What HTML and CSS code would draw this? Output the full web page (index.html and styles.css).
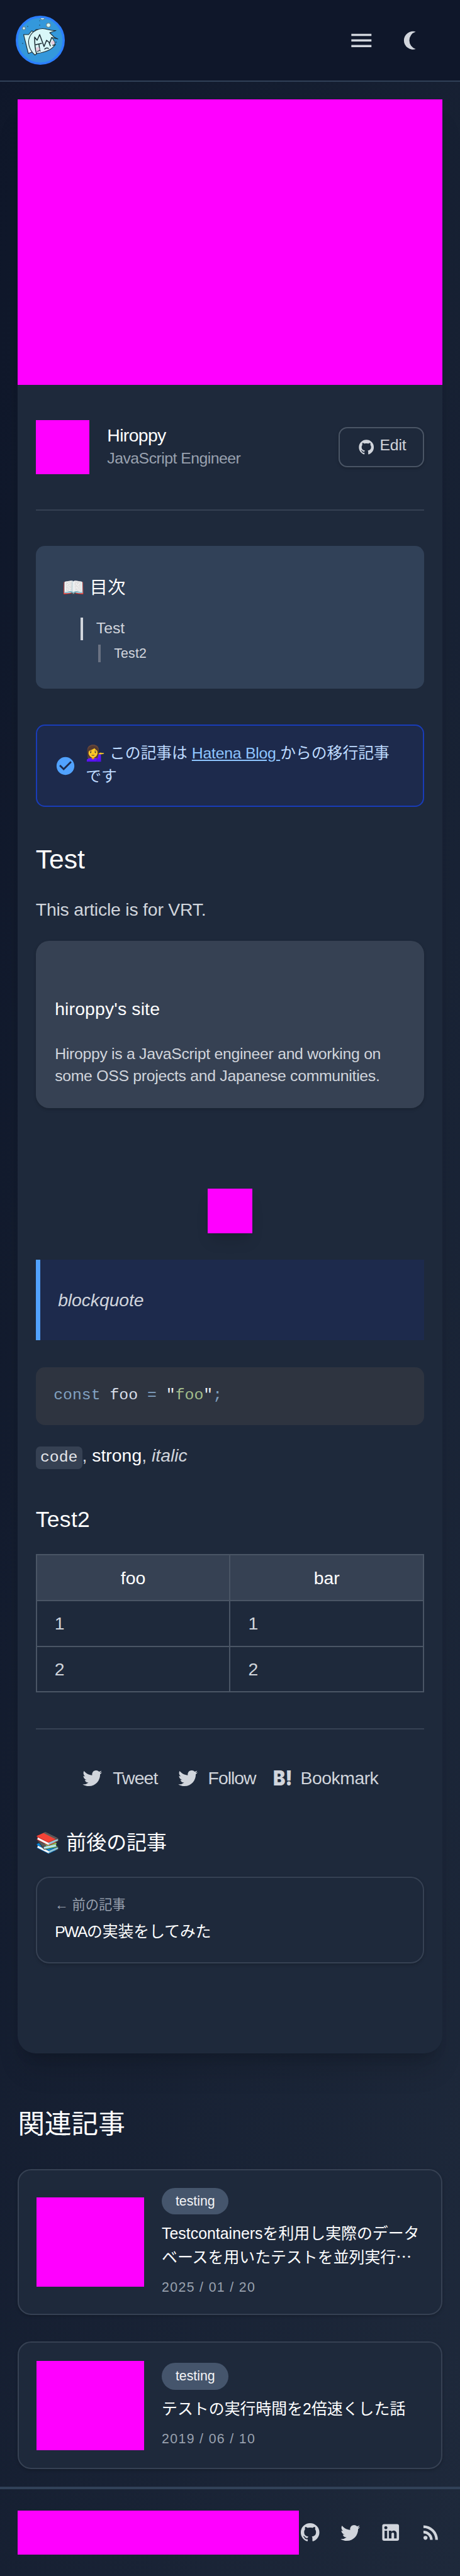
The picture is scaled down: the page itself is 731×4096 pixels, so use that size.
FILE: index.html
```html
<!DOCTYPE html>
<html lang="ja">
<head>
<meta charset="utf-8">
<title>Test</title>
<link rel="stylesheet" href="styles.css">
</head>
<body>
<svg class="sprite" aria-hidden="true">
  <symbol id="github" viewBox="0 0 24 24"><path d="M12 2A10 10 0 0 0 2 12c0 4.42 2.87 8.17 6.84 9.5c.5.08.66-.23.66-.5v-1.69c-2.77.6-3.36-1.34-3.36-1.34c-.46-1.16-1.11-1.47-1.11-1.47c-.91-.62.07-.6.07-.6c1 .07 1.53 1.03 1.53 1.03c.87 1.52 2.34 1.07 2.91.83c.09-.65.35-1.09.63-1.34c-2.22-.25-4.55-1.11-4.55-4.92c0-1.11.38-2 1.03-2.71c-.1-.25-.45-1.29.1-2.64c0 0 .84-.27 2.75 1.02c.79-.22 1.65-.33 2.5-.33c.85 0 1.71.11 2.5.33c1.91-1.29 2.75-1.02 2.75-1.02c.55 1.35.2 2.39.1 2.64c.65.71 1.03 1.6 1.03 2.71c0 3.82-2.34 4.66-4.57 4.91c.36.31.69.92.69 1.85V21c0 .27.16.59.67.5C19.14 20.16 22 16.42 22 12A10 10 0 0 0 12 2"/></symbol>
  <symbol id="twitter" viewBox="0 0 24 24"><path d="M22.46 6c-.77.35-1.6.58-2.46.69c.88-.53 1.56-1.37 1.88-2.38c-.83.5-1.75.85-2.72 1.05C18.37 4.5 17.26 4 16 4c-2.35 0-4.27 1.92-4.27 4.29c0 .34.04.67.11.98C8.28 9.09 5.11 7.38 3 4.79c-.37.63-.58 1.37-.58 2.15c0 1.49.75 2.81 1.91 3.56c-.71 0-1.37-.2-1.95-.5v.03c0 2.08 1.48 3.82 3.44 4.21a4.22 4.22 0 0 1-1.93.07a4.28 4.28 0 0 0 4 2.98a8.521 8.521 0 0 1-5.33 1.84c-.34 0-.68-.02-1.02-.06C3.44 20.29 5.7 21 8.12 21C16 21 20.33 14.46 20.33 8.79c0-.19 0-.37-.01-.56c.84-.6 1.56-1.36 2.14-2.23"/></symbol>
</svg>

<header class="site-header">
  <svg class="logo" viewBox="0 0 78 78">
    <circle cx="39" cy="39" r="37.2" fill="#3498db" stroke="#2b7fff" stroke-width="3.6"/>
    <g stroke="#1c2b33" stroke-width="1.1" stroke-linejoin="round" stroke-linecap="round" fill="#d8f7f8">
      <path d="M39 4c1 3 6 3 7 0" stroke="#6d7f80"/>
      <circle cx="52" cy="15" r="3.3" stroke="#6d7f80"/>
      <circle cx="13" cy="20" r="2.2" stroke="#6d7f80"/>
      <path d="M20 60 12.500 30h8l5-6 3 2 4-4 6 0-13 36z"/>
      <path d="M30.500 62.500C22 55 18 43 22 34C26 24 38 19 47 21C54 22.500 58 24 64 23.500L54 27L61 34L67 37L57 34.500C61 39 63 43 62 47C57 54 48 58 34 60z"/>
      <path d="M33 60C30 51 30 42 30 34L34 39L38 30L45 49L49 39L54 43L57 35M32 46L41 44M37 46L38 54M53 43L55 48M35 57Q36 54 39 56M46 53Q49 50 52 52M59 47L63 46" fill="none" stroke-width="1.5"/>
    </g>
    <g fill="#f0b9d2" opacity=".65"><circle cx="35" cy="53" r="3"/><circle cx="59" cy="43" r="3"/></g>
    <g fill="#2b6489"><circle cx="19" cy="17" r="1"/><circle cx="38" cy="15" r="1"/><circle cx="38" cy="8" r=".8"/><circle cx="11" cy="44" r="1"/><circle cx="64" cy="42" r="1.200"/></g>
  </svg>
  <nav class="header-nav">
    <svg class="icon-menu" viewBox="0 0 24 24"><path d="M3 6h18v2H3zM3 11h18v2H3zM3 16h18v2H3z"/></svg>
    <svg class="icon-moon" viewBox="0 0 24 24"><path d="M2 12a10 10 0 0 0 13 9.540a10 10 0 0 1 0-19.080A10 10 0 0 0 2 12"/></svg>
  </nav>
</header>

<main class="main">
  <article class="article">
    <div class="hero"></div>
    <div class="content">
      <div class="author">
        <div class="avatar"></div>
        <div class="author-text">
          <div class="author-name">Hiroppy</div>
          <div class="author-role">JavaScript Engineer</div>
        </div>
        <a class="edit"><svg><use href="#github"/></svg><span>Edit</span></a>
      </div>
      <div class="rule"></div>

      <nav class="toc">
        <div class="toc-title">📖 目次</div>
        <div class="toc-item">Test</div>
        <div class="toc-item toc-sub">Test2</div>
      </nav>

      <aside class="alert">
        <svg viewBox="0 0 24 24"><path d="M12 2C6.500 2 2 6.500 2 12s4.500 10 10 10 10-4.500 10-10S17.500 2 12 2m-2 15-5-5 1.410-1.410L10 14.170l7.590-7.590L19 8z"/></svg>
        <p>💁‍♀️ この記事は <a>Hatena Blog </a>からの移行記事<br>です</p>
      </aside>

      <h2 class="h2">Test</h2>
      <p class="lead">This article is for VRT.</p>

      <a class="link-card">
        <div class="link-title">hiroppy's site</div>
        <div class="link-desc">Hiroppy is a JavaScript engineer and working on<br>some OSS projects and Japanese communities.</div>
      </a>

      <div class="picture"></div>
      <blockquote class="quote">blockquote</blockquote>
      <pre class="code"><span class="k">const</span> foo <span class="k">=</span> <span class="q">"</span><span class="s">foo</span><span class="q">"</span><span class="k">;</span></pre>
      <p class="inline"><code>code</code>, <strong>strong</strong>, <em>italic</em></p>

      <h3 class="h3">Test2</h3>
      <table class="table">
        <tr><th>foo</th><th>bar</th></tr>
        <tr><td>1</td><td>1</td></tr>
        <tr><td>2</td><td>2</td></tr>
      </table>
      <div class="rule rule-share"></div>

      <div class="share">
        <a><svg><use href="#twitter"/></svg><span class="w-tweet">Tweet</span></a>
        <a><svg><use href="#twitter"/></svg><span class="w-follow">Follow</span></a>
        <a><svg class="hatena" viewBox="0 0 28.400 24"><text x="-1" y="24" textLength="30.500" lengthAdjust="spacingAndGlyphs">B!</text></svg><span class="w-bookmark">Bookmark</span></a>
      </div>

      <div class="around-title">📚 前後の記事</div>
      <a class="prev">
        <div class="prev-label">← 前の記事</div>
        <div class="prev-title"><span class="pwa">PWA</span>の実装をしてみた</div>
      </a>
    </div>
  </article>

  <h2 class="related-title">関連記事</h2>
  <a class="related related-first">
    <div class="thumb"></div>
    <div class="related-body">
      <span class="tag">testing</span>
      <div class="related-name">Testcontainersを利用し実際のデータ<br>ベースを用いたテストを並列実行<span class="dots">…</span></div>
      <div class="date">2025 / 01 / 20</div>
    </div>
  </a>
  <a class="related related-second">
    <div class="thumb"></div>
    <div class="related-body">
      <span class="tag">testing</span>
      <div class="related-name">テストの実行時間を2倍速くした話</div>
      <div class="date">2019 / 06 / 10</div>
    </div>
  </a>
</main>

<footer class="footer">
  <div class="footer-box"></div>
  <div class="socials">
    <svg><use href="#github"/></svg>
    <svg><use href="#twitter"/></svg>
    <svg viewBox="0 0 24 24"><path d="M19 3a2 2 0 0 1 2 2v14a2 2 0 0 1-2 2H5a2 2 0 0 1-2-2V5a2 2 0 0 1 2-2h14m-.5 15.500v-5.300a3.260 3.260 0 0 0-3.260-3.260c-.85 0-1.840.52-2.320 1.300v-1.110h-2.790v8.370h2.790v-4.930c0-.77.62-1.400 1.390-1.400a1.400 1.400 0 0 1 1.400 1.400v4.930h2.790M6.880 8.560a1.680 1.680 0 0 0 1.680-1.680c0-.93-.75-1.690-1.680-1.690a1.690 1.690 0 0 0-1.690 1.690c0 .93.76 1.680 1.690 1.680m1.390 9.940v-8.370H5.500v8.370h2.770Z"/></svg>
    <svg viewBox="0 0 24 24"><path d="M6.180 15.640a2.180 2.180 0 0 1 2.180 2.180C8.360 19 7.380 20 6.180 20C5 20 4 19 4 17.820a2.180 2.180 0 0 1 2.180-2.180M4 4.440A15.560 15.560 0 0 1 19.560 20h-2.830A12.730 12.730 0 0 0 4 7.270V4.440m0 5.660a9.900 9.900 0 0 1 9.900 9.900h-2.830A7.070 7.070 0 0 0 4 12.930V10.100Z"/></svg>
  </div>
</footer>
</body>
</html>
```
FILE: styles.css
```css
* { box-sizing: border-box; margin: 0; padding: 0; }
html { background: #0f172a; }
body {
  width: 731px;
  height: 4096px;
  overflow: hidden;
  display: flex;
  flex-direction: column;
  font-family: "Liberation Sans", "Noto Sans CJK JP", "Noto Color Emoji", sans-serif;
  font-size: 28.4px;
  font-weight: 400;
  color: #d1d5dc;
  background: linear-gradient(to bottom right, #0f172a, #1e293b);
}
svg { display: block; fill: currentColor; flex: none; }
.sprite { display: none; }
h2, h3, strong, th { font-weight: 400; color: #fff; }

.site-header {
  flex: none;
  height: 129.6px;
  padding: 0 25px;
  display: flex;
  align-items: center;
  justify-content: space-between;
  background: #0f172a;
  border-bottom: 2px solid #314158;
}
.logo { width: 78px; height: 78px; }
.header-nav { display: flex; align-items: center; margin-right: 33px; gap: 42.6px; }
.icon-menu { width: 42.6px; height: 42.6px; }
.icon-moon { width: 34.5px; height: 34.5px; }

.main { padding: 28px 28.4px 0; flex: none; height: 3824.600px; }
.article {
  height: 3107px;
  border-radius: 0 0 28.4px 28.4px;
  background: #1e293b;
  box-shadow: 0 35px 44px -9px rgba(0,0,0,.12), 0 14px 18px -10px rgba(0,0,0,.14);
}
.hero { height: 454.2px; background: #f0f; }
.content { padding: 56.600px 28.4px 0; }

.author { display: flex; align-items: center; height: 85.2px; }
.avatar { width: 85.2px; height: 85.2px; background: #f0f; }
.author-text { margin: -3px 0 0 28.4px; flex: 1; }
.author-name { color: #fff; line-height: 40px; letter-spacing: -.65px; }
.author-role { color: #99a1af; font-size: 24.8px; line-height: 34px; letter-spacing: -.53px; }
.edit {
  display: flex;
  align-items: center;
  width: 136.3px;
  height: 64px;
  padding-left: 28px;
  gap: 7.200px;
  font-size: 24.8px;
  letter-spacing: -.2px;
  border: 2px solid #4a5565;
  border-radius: 14px;
  box-shadow: 0 2px 5px rgba(0,0,0,.2);
}
.edit svg { width: 28.4px; height: 28.4px; }
.edit span { line-height: 36px; margin-top: -5px; }
.rule { height: 2px; margin-top: 56.600px; background: #364153; }

.toc {
  margin-top: 56.200px;
  height: 227px;
  padding: 45.4px 42.6px;
  border-radius: 14.2px;
  background: #314158;
}
.toc-title { line-height: 40px; color: #fff; }
.toc-item {
  margin: 27.8px 0 0 28.4px;
  padding: 0 0 2px 21px;
  line-height: 34px;
  font-size: 24.8px;
  border-left: 4px solid #d1d5dc;
}
.toc-sub {
  margin: 7px 0 0 56.8px;
  padding-bottom: 0;
  line-height: 28.4px;
  font-size: 21.3px;
  letter-spacing: .2px;
  border-color: #6a7282;
}

.alert {
  display: flex;
  margin-top: 56.8px;
  height: 131px;
  padding: 26px 28px 0;
  border: 2px solid #193cb8;
  border-radius: 14.2px;
  background: #1d2a4c;
  color: #bedbff;
}
.alert svg { width: 34px; height: 34px; margin-top: 20.700px; color: #51a2ff; }
.alert p { margin-left: 15.400px; font-size: 24.8px; line-height: 36.5px; white-space: nowrap; }
.alert a { color: #8ec5ff; text-decoration: underline; letter-spacing: -.25px; }

.h2 { margin-top: 54.7px; font-size: 42.6px; line-height: 56.8px; }
.lead { margin-top: 26.100px; line-height: 50px; letter-spacing: -.2px; }

.link-card {
  display: block;
  margin-top: 25.500px;
  height: 266px;
  padding: 87.8px 30.4px 0;
  border-radius: 21.3px;
  background: #364153;
  box-shadow: 0 2px 5px rgba(0,0,0,.2);
}
.link-title { color: #fff; line-height: 40px; letter-spacing: .15px; }
.link-desc { margin-top: 34.2px; font-size: 24.8px; line-height: 35.1px; letter-spacing: -.3px; white-space: nowrap; }

.picture {
  width: 71px;
  height: 71px;
  margin: 127.600px auto 0;
  background: #f0f;
  box-shadow: 0 16px 24px -5px rgba(0,0,0,.12), 0 7px 10px -6px rgba(0,0,0,.12);
}
.quote {
  display: flex;
  align-items: center;
  margin-top: 42.4px;
  height: 127.7px;
  padding-left: 28.4px;
  border-left: 7px solid #51a2ff;
  background: #1d2a4c;
  font-style: italic;
  letter-spacing: -.1px;
}
.code {
  margin-top: 42.8px;
  height: 92.4px;
  padding: 24.2px 28.4px;
  border-radius: 14.2px;
  background: #2e3440;
  color: #d8dee9;
  font: 24.8px/40px "Liberation Mono", monospace;
}
.k { color: #81a1c1; }
.q { color: #eceff4; }
.s { color: #a3be8c; }
.inline { margin-top: 22.8px; line-height: 50px; height: 50px; }
.inline code {
  padding: 3px 7.1px 5px;
  border-radius: 7px;
  background: #364153;
  color: #e5e7eb;
  font: 24.8px "Liberation Mono", monospace;
}

.h3 { margin-top: 52.5px; font-size: 35.5px; line-height: 50px; letter-spacing: .3px; }
.table {
  width: 100%;
  height: 220px;
  margin-top: 30px;
  border-collapse: collapse;
  table-layout: fixed;
}
.table th, .table td { border: 2px solid #4a5565; height: 72.7px; padding: 0 28px; line-height: 40px; }
.table th:first-child { width: 307.600px; }
.table th { background: #364153; text-align: center; }
.rule-share { margin-top: 56.300px; }

.share { display: flex; justify-content: center; gap: 28.4px; margin-top: 57.4px; height: 40px; }
.share a { display: flex; align-items: center; gap: 14.2px; line-height: 40px; white-space: nowrap; }
.share svg { width: 35.5px; height: 35.5px; }
.share .hatena { width: 28.4px; height: 24px; overflow: visible; }
.hatena text { font: 900 33px Inter, sans-serif; }
.w-tweet { width: 73.300px; letter-spacing: -.9px; }
.w-follow { width: 76px; letter-spacing: -1px; }
.w-bookmark { width: 124px; letter-spacing: -.5px; }

.around-title { margin-top: 58px; font-size: 31.9px; line-height: 50px; color: #fff; }
.prev {
  display: block;
  margin-top: 29.200px;
  height: 137.600px;
  padding: 28.2px 28.4px;
  border: 2px solid #364153;
  border-radius: 21.3px;
  box-shadow: 0 2px 5px rgba(0,0,0,.2);
}
.prev-label { font-size: 21.3px; line-height: 28px; color: #99a1af; }
.prev-title { margin-top: 11.500px; font-size: 24.8px; line-height: 36px; color: #fff; }
.pwa { letter-spacing: -1.600px; }

.related-title { margin-top: 82.600px; font-size: 42.6px; line-height: 60px; }
.related {
  display: flex;
  align-items: center;
  padding: 0 28px;
  border: 2px solid #364153;
  border-radius: 21.3px;
  background: #1e293b;
  box-shadow: 0 2px 5px rgba(0,0,0,.2);
}
.related-first { margin-top: 41.5px; height: 232.100px; }
.related-second { margin-top: 42.6px; height: 202.4px; }
.thumb { width: 170.300px; height: 142px; background: #f0f; flex: none; }
.related-body { margin-left: 28.4px; }
.tag {
  display: block;
  width: 106.4px;
  height: 42.4px;
  border-radius: 21.3px;
  background: #45556c;
  color: #f3f4f6;
  font-size: 21.3px;
  line-height: 42.4px;
  text-align: center;
}
.related-name { margin-top: 12px; font-size: 24.9px; line-height: 36px; color: #fff; white-space: nowrap; }
.dots { font-family: "Noto Sans CJK JP", sans-serif; }
.date { margin-top: 16px; font-size: 21.3px; line-height: 28px; letter-spacing: 1.35px; color: #99a1af; }

.footer {
  flex: none;
  display: flex;
  height: 141.8px;
  padding: 33.400px 28.4px 0;
  border-top: 4px solid #314158;
}
.footer-box { width: 447px; height: 70.7px; background: #f0f; }
.socials { display: flex; gap: 28.4px; height: 70.7px; align-items: center; }
.socials svg { width: 35.5px; height: 35.5px; }
```
